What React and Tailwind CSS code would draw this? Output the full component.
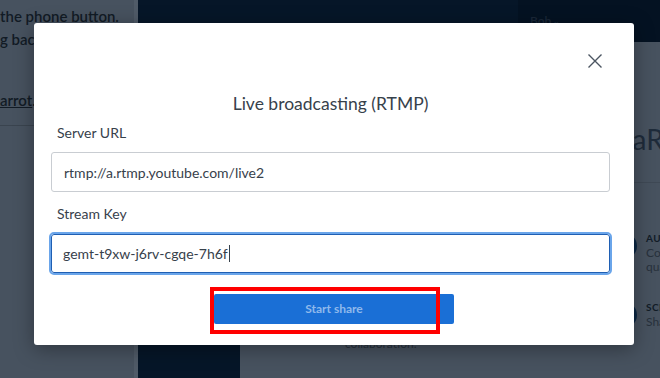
import React from 'react';

const FONT = { fontFamily: 'Lato, "Open Sans", sans-serif' };

function CloseIcon() {
  return (
    <svg width="16" height="16" viewBox="0 0 16 16" fill="none" stroke="#4b5561" strokeWidth="1.4">
      <path d="M1.5 1.5 L14.5 14.5 M14.5 1.5 L1.5 14.5" />
    </svg>
  );
}

function Feature({ title, lines }) {
  return (
    <div className="flex items-start gap-[9px]">
      <div className="mt-[2px] h-[26px] w-[26px] shrink-0 rounded-full bg-[#0b2745]" />
      <div className="flex flex-col whitespace-nowrap">
        <span className="text-[10px] font-bold tracking-wider text-[#121c27]">{title}</span>
        {lines.map(l => (
          <span key={l} className="text-[12px] leading-[14px] text-[#27313c]">{l}</span>
        ))}
      </div>
    </div>
  );
}

export default function App() {
  return (
    <div className="relative h-[378px] w-[660px] overflow-hidden bg-[#47525f]" style={FONT}>
      {/* Page behind the dialog */}
      <div className="flex h-full">
        <div className="flex w-[138px] shrink-0 flex-col border-r-[4px] border-[#505b68] bg-[#47525f]">
          <div className="pt-[5px] text-[15px] font-semibold leading-[23px] text-[#121b25]">
            <p className="whitespace-nowrap">the phone button.</p>
            <p className="whitespace-nowrap">g back</p>
            <p className="mt-[38px] whitespace-nowrap"><span className="underline">arrot</span>.</p>
          </div>
          <div className="mt-[13px] border-t border-[#3a444f]" />
        </div>
        <div className="w-[102px] shrink-0 bg-[#061628]" />
        <div className="flex min-w-0 flex-1 flex-col">
          <div className="flex h-[42px] items-center justify-between bg-[#061628]">
            <div />
            <div className="flex h-full w-[142px] items-center bg-[#041222] pl-[12px] text-[12px] font-semibold text-[#1a2738]">
              Bob <span className="ml-[2px] text-[8px]">⌄</span>
            </div>
          </div>
          <div className="flex flex-1 flex-col">
            <div className="ml-[377px] mt-[80px] whitespace-nowrap text-[28px] leading-[34px] text-[#1e2b3a]">naRoom</div>
            <div className="mt-[26px] border-t border-[#3f4955]" />
            <div className="ml-[371px] mt-[48px] flex flex-col gap-[26px]">
              <Feature title="AUDIO" lines={['Configure', 'quality']} />
              <Feature title="SCREEN" lines={['Share']} />
            </div>
            <div className="ml-[105px] mt-[8px] text-[12px] leading-[14px] text-[#27313c]">collaboration.</div>
          </div>
        </div>
      </div>

      {/* Dialog */}
      <div className="absolute left-[34px] top-[23px] h-[322px] w-[600px] rounded-[3px] bg-white shadow-[0_4px_20px_rgba(0,0,0,0.35)]">
        <button className="absolute right-[31px] top-[30px]">
          <CloseIcon />
        </button>
        <div className="flex flex-col pl-[17px] pr-[24px] pt-[70px]">
          <h2 className="text-center text-[17.5px] leading-[22px] text-[#37414b]">Live broadcasting (RTMP)</h2>
          <label className="ml-[6px] mt-[9px] text-[14px] leading-[18px] text-[#37414b]">Server URL</label>
          <div className="mt-[10px] flex h-[40px] items-center rounded-[3px] border border-[#c9cdd2] px-[12px] text-[14px] text-[#37414b]">
            rtmp://a.rtmp.youtube.com/live2
          </div>
          <label className="ml-[6px] mt-[13px] text-[14px] leading-[18px] text-[#37414b]">Stream Key</label>
          <div className="mt-[11px] flex h-[39px] items-center rounded-[3px] border border-[#1f5fb3] px-[11px] text-[14px] text-[#37414b] outline-[2px] outline-solid outline-[#6aa5ea]">
            gemt-t9xw-j6rv-cgqe-7h6f<span className="ml-[1px] inline-block h-[17px] w-px bg-[#37414b]" />
          </div>
          <div className="mt-[21px] flex justify-center pl-[7px]">
            <div className="relative">
              <button className="flex h-[30px] w-[240px] items-center justify-center rounded-[2px] bg-[#1a6fd6] text-[12px] font-bold text-[#8fb9ec]">
                Start share
              </button>
              <div className="absolute left-[-4px] top-[-7px] h-[47px] w-[230px] border-[4px] border-[#ff0000]" />
            </div>
          </div>
        </div>
      </div>
    </div>
  );
}
